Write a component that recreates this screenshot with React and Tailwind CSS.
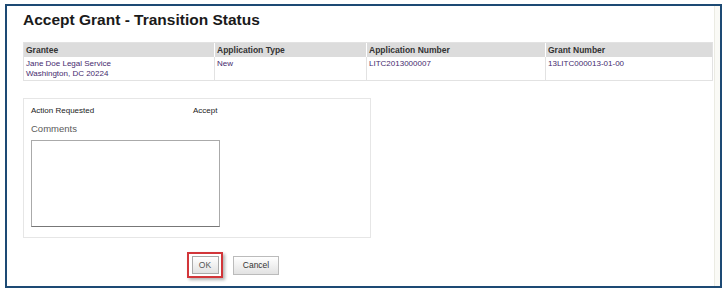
export default function App() {
  const cols = [
    { head: "Grantee", lines: ["Jane Doe Legal Service", "Washington, DC 20224"] },
    { head: "Application Type", lines: ["New"] },
    { head: "Application Number", lines: ["LITC2013000007"] },
    { head: "Grant Number", lines: ["13LITC000013-01-00"] },
  ];

  return (
    <div className="w-[724px] h-[291px] bg-white pt-[4px] pl-[5px] font-['Liberation_Sans',Arial,sans-serif]">
      <div className="w-[717px] h-[284px] border-2 border-[#1d4a74] flex">
        <div className="flex-1 pl-[16px] pr-[1px] pt-[5px]">
          <h1 className="text-[15.5px] leading-[18px] font-bold text-[#1a1a1a]">
            Accept Grant - Transition Status
          </h1>

          <div className="mt-[13px] border border-[#e2e2e2] grid grid-cols-[190px_152px_179px_1fr]">
            {cols.map((c, i) => (
              <div key={c.head} className={i > 0 ? "border-l border-white" : ""}>
                <div className="bg-[#dcdcdc] h-[14px] leading-[14px] pl-[2px] text-[8.5px] font-bold text-[#333]">
                  {c.head}
                </div>
                <div
                  className={
                    "h-[23px] pt-[2px] pl-[2px] text-[8px] leading-[10px] text-[#452a6e] " +
                    (i > 0 ? "border-l border-[#e2e2e2] -ml-px" : "")
                  }
                >
                  {c.lines.map((l) => (
                    <div key={l}>{l}</div>
                  ))}
                </div>
              </div>
            ))}
          </div>

          <div className="mt-[17px] w-[348px] h-[140px] border border-[#e6e6e6] pl-[7px] pt-[7px]">
            <div className="flex text-[8px] leading-[10px] text-[#222]">
              <div className="w-[162px]">Action Requested</div>
              <div>Accept</div>
            </div>
            <div className="mt-[7px] text-[9.5px] leading-[11px] text-[#5a5a5a]">Comments</div>
            <textarea className="mt-[6px] block w-[189px] h-[87px] border border-[#aaa] border-b-[#777] resize-none bg-white outline-none" />
          </div>

          <div className="mt-[14px] flex items-center">
            <div className="ml-[164px] w-[36px] h-[26px] border-2 border-[#d2363a] shadow-[2px_2px_3px_rgba(0,0,0,0.3)] flex items-center justify-center">
              <button className="w-[27px] h-[18px] border border-[#aaa] bg-gradient-to-b from-white to-[#e2e2e2] text-[8.5px] text-[#555]">
                OK
              </button>
            </div>
            <button className="ml-[10px] w-[46px] h-[19px] border border-[#bbb] bg-gradient-to-b from-white to-[#e2e2e2] text-[8.5px] text-[#333]">
              Cancel
            </button>
          </div>
        </div>
        <div className="w-[6px] bg-[#fafaf6] border-l border-[#ebebe3]" />
      </div>
    </div>
  );
}
